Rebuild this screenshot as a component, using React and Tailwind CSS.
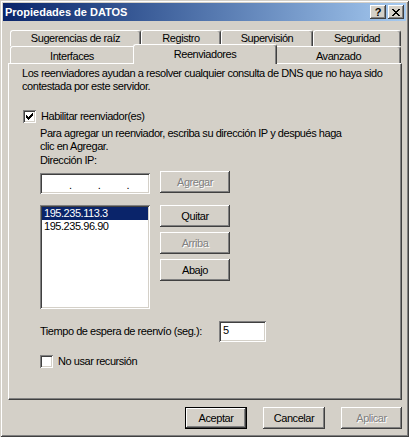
import React from 'react'

const raised = 'shadow-[inset_-1px_-1px_#404040,inset_1px_1px_#ffffff,inset_-2px_-2px_#808080,inset_2px_2px_#d4d0c8]'
const sunken = 'shadow-[inset_1px_1px_#808080,inset_-1px_-1px_#ffffff,inset_2px_2px_#404040,inset_-2px_-2px_#d4d0c8]'
const defBtn = 'shadow-[inset_0_0_0_1px_#000000,inset_-2px_-2px_#404040,inset_2px_2px_#ffffff,inset_-3px_-3px_#808080,inset_3px_3px_#d4d0c8]'
const off = 'text-[#808080] [text-shadow:1px_1px_0_#ffffff]'

function Btn({ children, w = 'w-[70px]', disabled, isDefault }){
  return (
    <div className={`${w} h-[22px] flex items-center justify-center bg-[#d4d0c8] ${isDefault ? defBtn : raised} ${disabled ? off : 'text-black'}`}>
      {children}
    </div>
  )
}

function Check({ checked }){
  return (
    <div className={`w-[13px] h-[13px] bg-white ${sunken} flex items-center justify-center shrink-0`}>
      {checked && (
        <svg width="7" height="7" viewBox="0 0 7 7" shapeRendering="crispEdges">
          <path d="M0 2h1v1h1v1h1v-1h1v-1h1v-1h1v-1h1v3h-1v1h-1v1h-1v1h-1v1h-1v-1h-1v-1h-1z" fill="#000" />
        </svg>
      )}
    </div>
  )
}

function BackTab({ label, w }){
  return (
    <div className={`${w} h-[16px] border-t border-l border-white border-r border-r-[#404040] rounded-t-[3px] shadow-[inset_-1px_0_#808080] flex justify-center pt-[1px] leading-[13px]`}>
      {label}
    </div>
  )
}

export default function App(){
  return (
    <div className="w-[409px] h-[437px] bg-[#d4d0c8] font-['Liberation_Sans',Arial,sans-serif] text-[11px] leading-[13px] tracking-[-0.45px] text-black shadow-[inset_1px_1px_#d4d0c8,inset_-1px_-1px_#404040,inset_2px_2px_#ffffff,inset_-2px_-2px_#808080] pt-[3px] flex flex-col">
      {/* title bar */}
      <div className="mx-[3px] h-[18px] bg-linear-to-r from-[#0a246a] to-[#a6caf0] flex items-center pl-[2px] pr-[2px]">
        <span className="text-white font-bold text-[11px] tracking-normal flex-1">Propiedades de DATOS</span>
        <div className={`w-[16px] h-[14px] bg-[#d4d0c8] ${raised} flex items-center justify-center font-bold text-[11px] tracking-normal leading-none`}>?</div>
        <div className={`w-[16px] h-[14px] ml-[2px] bg-[#d4d0c8] ${raised} flex items-center justify-center`}>
          <svg width="8" height="7" viewBox="0 0 8 7" shapeRendering="crispEdges">
            <path d="M0 0h2v1h1v1h2v-1h1v-1h2v1h-1v1h-1v1h-1v1h1v1h1v1h1v1h-2v-1h-1v-1h-2v1h-1v1h-2v-1h1v-1h1v-1h1v-1h-1v-1h-1v-1h-1z" fill="#000" />
          </svg>
        </div>
      </div>

      {/* tabs */}
      <div className="mt-[9px] ml-[10px] flex">
        <BackTab label="Sugerencias de raíz" w="w-[131px]" />
        <BackTab label="Registro" w="w-[80px]" />
        <BackTab label="Supervisión" w="w-[92px]" />
        <BackTab label="Seguridad" w="w-[88px]" />
      </div>
      <div className="ml-[10px] flex items-end h-[17px] relative z-10">
        <div className="w-[123px] h-[17px] border-t border-l border-white rounded-tl-[3px] flex justify-center pt-[3px]">Interfaces</div>
        <div className="w-[144px] h-[20px] -mb-[1px] bg-[#d4d0c8] border-t border-l border-white border-r border-r-[#404040] rounded-t-[3px] shadow-[inset_-1px_0_#808080] flex justify-center pt-[3px]">Reenviadores</div>
        <div className="w-[124px] h-[17px] border-t border-white border-r border-r-[#404040] rounded-tr-[3px] shadow-[inset_-1px_0_#808080] flex justify-center pt-[3px]">Avanzado</div>
      </div>

      {/* panel */}
      <div className="ml-[8px] w-[394px] h-[337px] border-t border-l border-white border-r border-b border-r-[#404040] border-b-[#404040] shadow-[inset_-1px_-1px_#808080] pl-[13px] pt-[3px] flex flex-col">
        <p className="whitespace-nowrap">Los reenviadores ayudan a resolver cualquier consulta de DNS que no haya sido<br />contestada por este servidor.</p>

        <div className="mt-[17px] flex items-center gap-[5px] ml-[1px]">
          <Check checked />
          <span>Habilitar reenviador(es)</span>
        </div>

        <div className="ml-[18px] flex flex-col">
          <p className="mt-[4px] whitespace-nowrap">Para agregar un reenviador, escriba su dirección IP y después haga<br />clic en Agregar.</p>
          <p className="mt-[1px]">Dirección IP:</p>

          <div className="mt-[4px] flex gap-[10px]">
            <div className={`mt-[2px] w-[110px] h-[21px] bg-white ${sunken} flex items-end justify-between pl-[29px] pr-[21px] pb-[2px] text-black`}>
              <span>.</span><span>.</span><span>.</span>
            </div>
            <Btn disabled>Agregar</Btn>
          </div>

          <div className="mt-[11px] flex gap-[10px]">
            <div className={`w-[110px] h-[104px] bg-white ${sunken} p-[2px] flex flex-col`}>
              <div className="bg-[#0a246a] text-white pl-[2px] h-[13px]">195.235.113.3</div>
              <div className="pl-[2px] h-[13px]">195.235.96.90</div>
            </div>
            <div className="flex flex-col gap-[5px]">
              <Btn>Quitar</Btn>
              <Btn disabled>Arriba</Btn>
              <Btn>Abajo</Btn>
            </div>
          </div>

          <div className="mt-[12px] flex items-center">
            <span className="w-[179px]">Tiempo de espera de reenvío (seg.):</span>
            <div className={`w-[47px] h-[21px] bg-white ${sunken} pl-[4px] pt-[3px]`}>5</div>
          </div>

          <div className="mt-[13px] flex items-center gap-[5px]">
            <Check />
            <span>No usar recursión</span>
          </div>
        </div>
      </div>

      {/* footer buttons */}
      <div className="mt-[7px] flex justify-end gap-[16px] pr-[7px]">
        <Btn w="w-[62px]" isDefault>Aceptar</Btn>
        <Btn w="w-[62px]">Cancelar</Btn>
        <Btn w="w-[61px]" disabled>Aplicar</Btn>
      </div>
    </div>
  )
}
